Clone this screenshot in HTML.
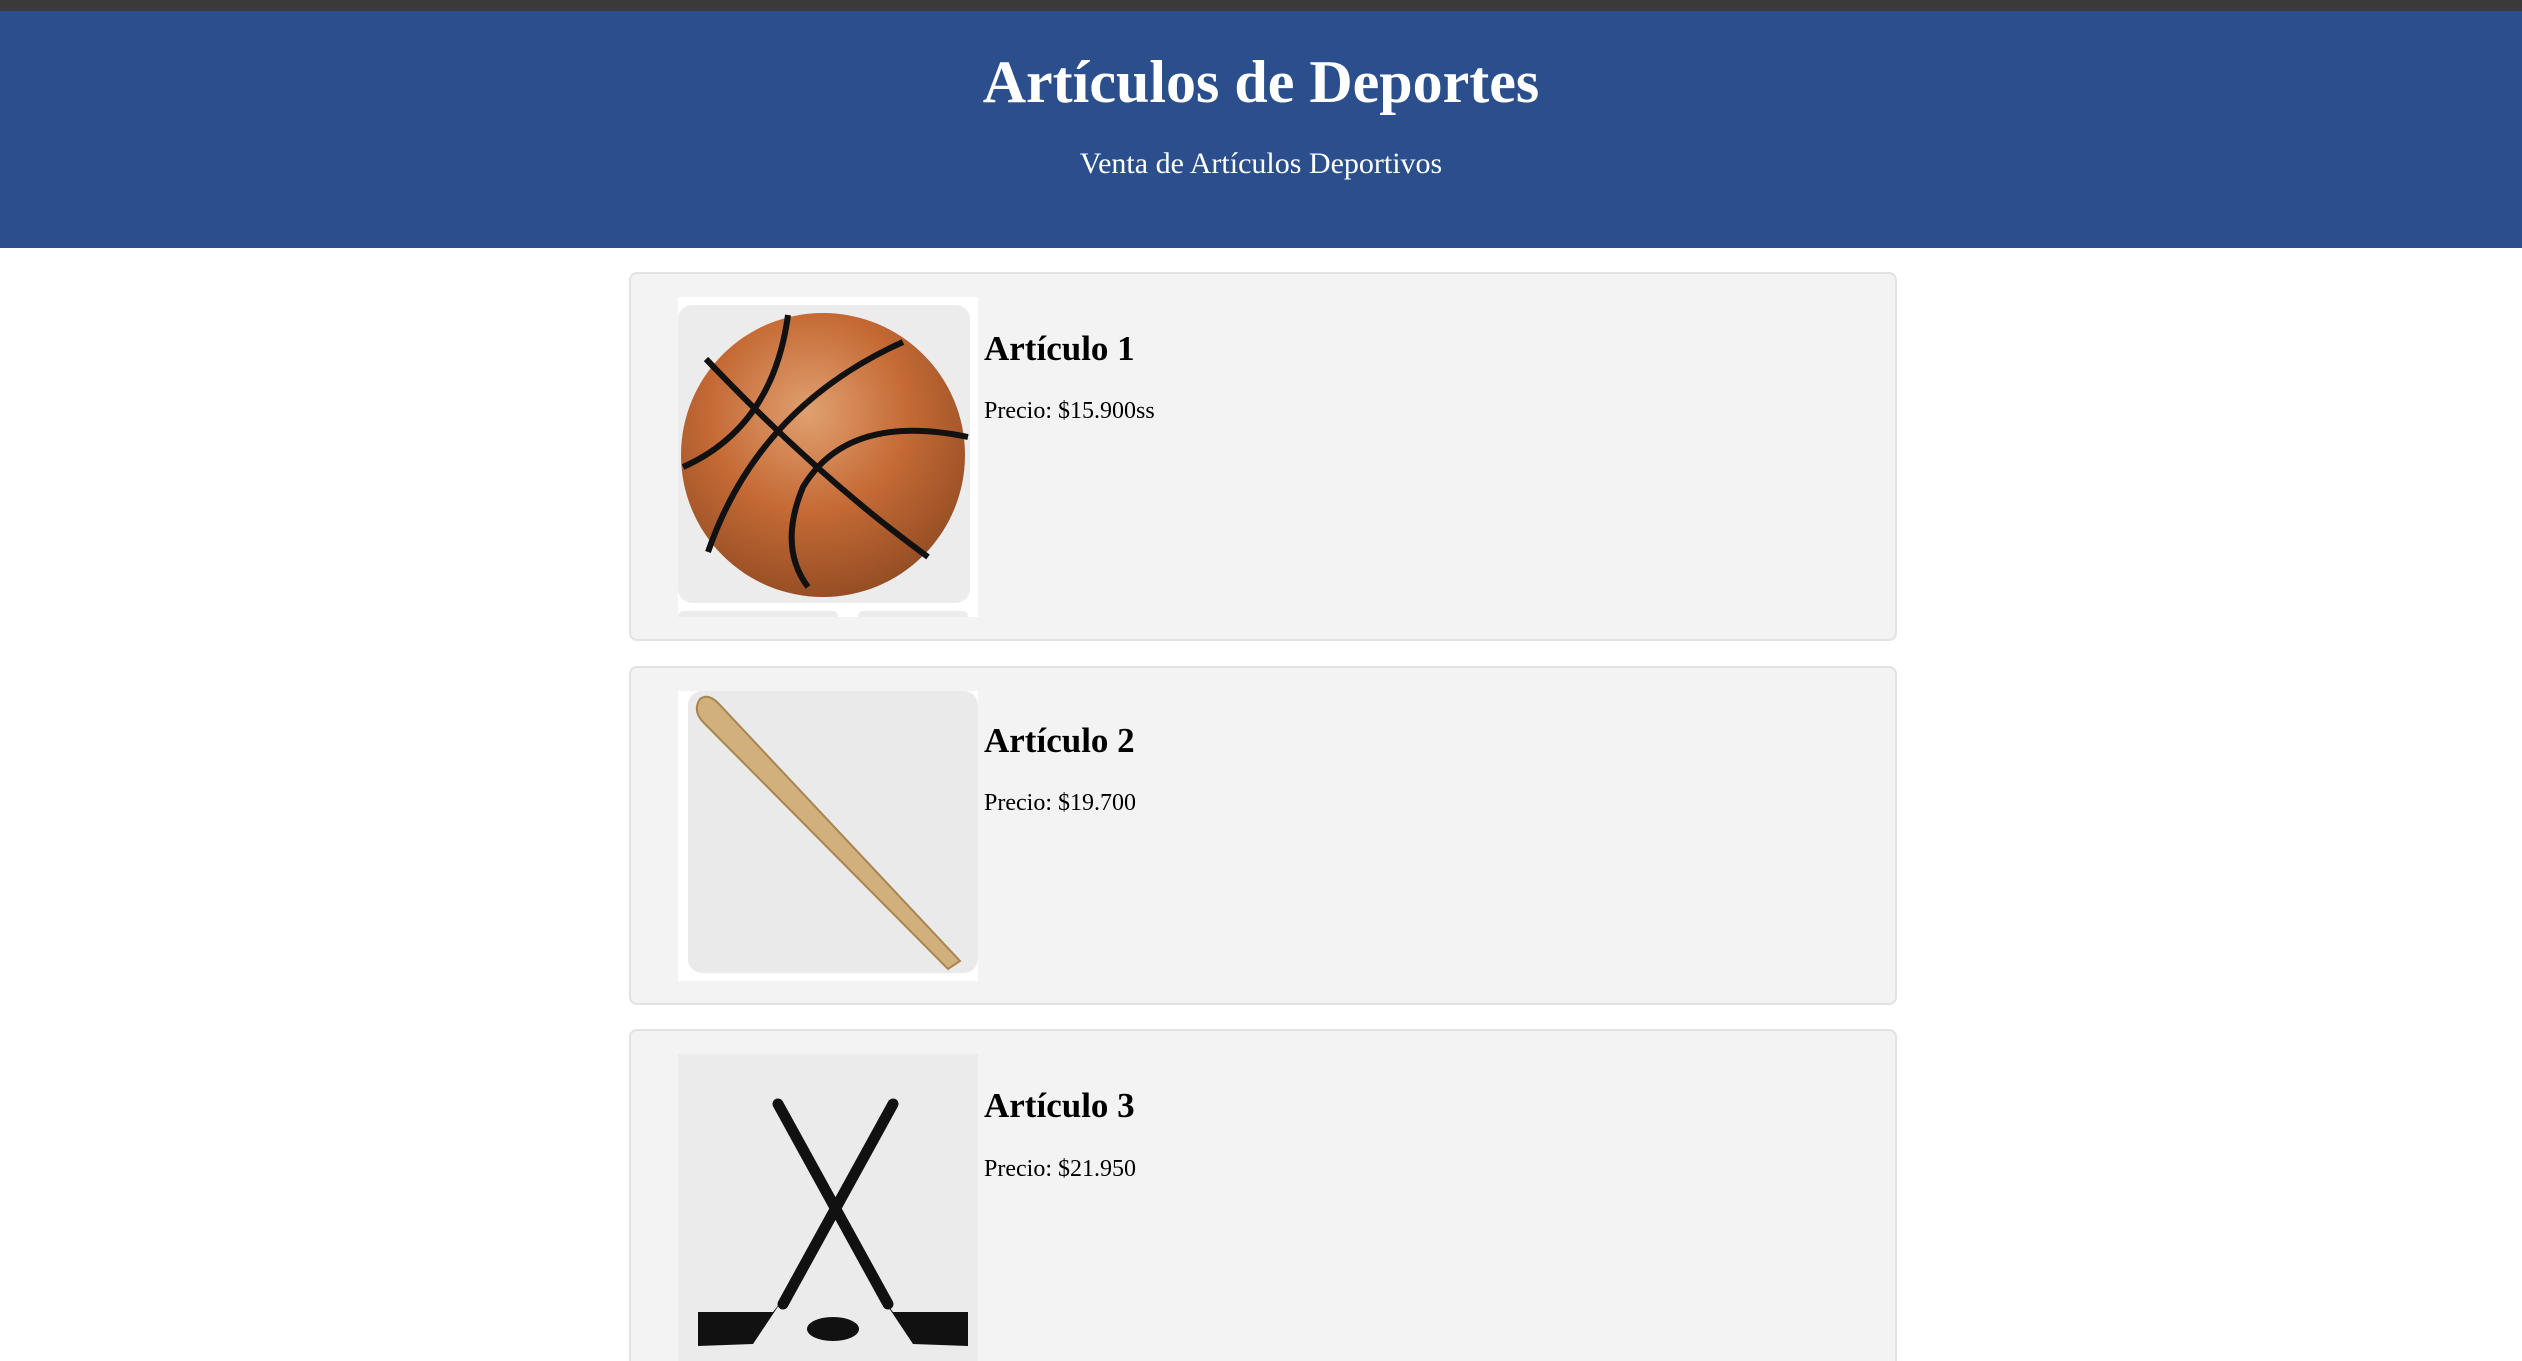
<!DOCTYPE html>
<html><head><meta charset="utf-8"><style>
html,body{margin:0;width:2522px;height:1361px;overflow:hidden}
body{background:#fff;font-family:"Liberation Serif",serif;position:relative}
.top{position:absolute;left:0;top:0;width:2522px;height:11px;background:#3a3a3a}
.hdr{position:absolute;left:0;top:11px;width:2522px;height:237px;background:#2b4f8c;color:#fff;text-align:center}
.hdr h1{margin:0;position:absolute;width:100%;top:37px;font-size:60px;font-weight:bold}
.hdr p{margin:0;position:absolute;width:100%;top:136px;font-size:30px}
.card{position:absolute;left:629px;width:1268px;background:#f3f3f3;border:2px solid #e2e2e2;border-radius:8px;box-sizing:border-box;overflow:hidden}
.img{position:absolute;left:47px;top:23px;width:300px;height:320px;background:#fff}
.t{position:absolute;left:353px;font-weight:bold;font-size:35px;color:#000}
.p{position:absolute;left:353px;font-size:24px;color:#000}
</style></head><body>
<div class="top"></div>
<div class="hdr"><h1>Artículos de Deportes</h1><p>Venta de Artículos Deportivos</p></div>

<div class="card" style="top:272px;height:369px">
<div class="img">
<svg width="300" height="320" viewBox="0 0 300 320">
<rect x="0" y="8" width="292" height="298" rx="14" fill="#ececec"/>
<rect x="0" y="314" width="160" height="10" rx="5" fill="#ececec"/>
<rect x="180" y="314" width="110" height="10" rx="5" fill="#ececec"/>
<defs><radialGradient id="g" cx="0.45" cy="0.35" r="0.7"><stop offset="0" stop-color="#e0a070"/><stop offset="0.5" stop-color="#c56a35"/><stop offset="1" stop-color="#8f4a22"/></radialGradient></defs>
<ellipse cx="145" cy="158" rx="142" ry="142" fill="url(#g)"/>
<g fill="none" stroke="#111" stroke-width="6">
<path d="M28 62 Q140 180 250 260"/>
<path d="M110 18 Q95 130 5 170"/>
<path d="M225 45 Q80 110 30 255"/>
<path d="M290 140 Q170 115 125 190 Q100 250 130 290"/>
</g></svg>
</div>
<div class="t" style="top:55px">Artículo 1</div>
<div class="p" style="top:124px">Precio: $15.900ss</div>
</div>

<div class="card" style="top:666px;height:339px">
<div class="img" style="height:290px">
<svg width="300" height="290" viewBox="0 0 300 290">
<rect x="10" y="0" width="290" height="282" rx="14" fill="#eaeaea"/>
<path d="M22 8 Q14 20 26 32 L270 278 L282 270 L40 12 Q30 2 22 8Z" fill="#d2b07c" stroke="#a88550" stroke-width="2"/>
</svg>
</div>
<div class="t" style="top:53px">Artículo 2</div>
<div class="p" style="top:122px">Precio: $19.700</div>
</div>

<div class="card" style="top:1029px;height:332px;border-bottom:none;border-radius:8px 8px 0 0">
<div class="img" style="background:#ebebeb;height:309px">
<svg width="300" height="309" viewBox="0 0 300 309">
<g stroke="#111" stroke-width="11" stroke-linecap="round" fill="none">
<path d="M100 50 L210 250"/><path d="M215 50 L105 250"/>
</g>
<path d="M105 245 L75 290 L20 292 L20 258 L95 258Z" fill="#111"/>
<path d="M205 245 L235 290 L290 292 L290 258 L215 258Z" fill="#111"/>
<ellipse cx="155" cy="275" rx="26" ry="12" fill="#111"/>
</svg>
</div>
<div class="t" style="top:55px">Artículo 3</div>
<div class="p" style="top:125px">Precio: $21.950</div>
</div>
</body></html>
